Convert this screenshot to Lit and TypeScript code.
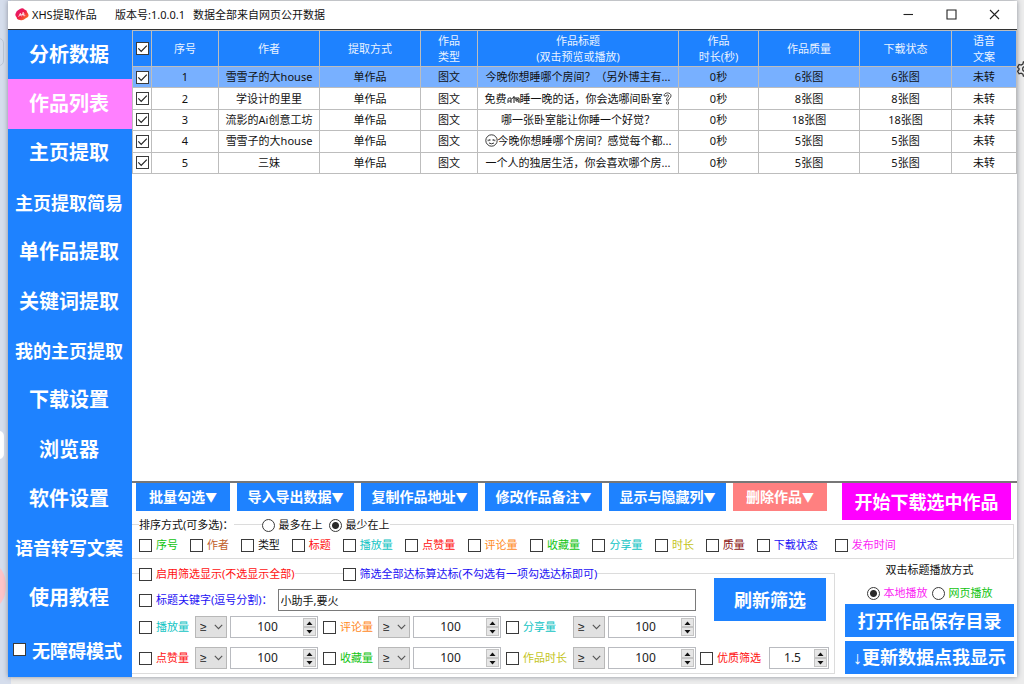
import { LitElement, html, css, svg, nothing } from "lit";
import { customElement, property, state } from "lit/decorators.js";
import { classMap } from "lit/directives/class-map.js";

const controls = css`
  :host,
  * {
    box-sizing: border-box;
  }
  button,
  input,
  select {
    font: inherit;
    color: inherit;
    margin: 0;
    padding: 0;
    border: 0;
    border-radius: 0;
    appearance: none;
  }
  .tick,
  .dot {
    flex: none;
    display: block;
    width: 13px;
    height: 13px;
    border: 1px solid #3a3a3a;
    background: #fff center / 11px 11px no-repeat;
  }
  .tick:checked {
    background-image: url("data:image/svg+xml,%3Csvg xmlns='http://www.w3.org/2000/svg' viewBox='0 0 11 11'%3E%3Cpath d='M1.3 5.4 4.2 8.3 9.8 2.7' fill='none' stroke='%23222' stroke-width='1.2'/%3E%3C/svg%3E");
  }
  .dot {
    border-radius: 50%;
  }
  .dot:checked {
    background-image: radial-gradient(circle, #2a2a2a 3px, transparent 4px);
  }
  .choice {
    display: inline-flex;
    align-items: center;
    gap: 4px;
    white-space: nowrap;
  }
  .green { color: #12c412; }
  .brown { color: #c0602a; }
  .black { color: #111; }
  .red { color: #ff1010; }
  .cyan { color: #12c4c4; }
  .orange { color: #ff8a1e; }
  .olive { color: #c4c41c; }
  .maroon { color: #8a1414; }
  .blue { color: #1c10f4; }
  .magenta { color: #fb1cf4; }
`;

@customElement("number-stepper")
export class NumberStepper extends LitElement {
  @property({ type: Number }) value = 0;
  @property({ type: Number }) step = 1;
  @property() label = "";

  static styles = [
    controls,
    css`
      :host {
        display: flex;
        height: 22px;
        padding: 1px;
        border: 1px solid #b9bbc0;
        background: #fff;
        font-size: 12px;
        color: #222;
      }
      .value {
        flex: 1;
        min-width: 0;
        text-align: center;
        background: none;
      }
      .arrows {
        display: grid;
        grid-template-rows: 1fr 1fr;
        width: 13px;
      }
      .arrow {
        display: grid;
        place-items: center;
        background: #e6e6e6;
        border: 1px solid #c4c4c4;
      }
      .arrow svg {
        display: block;
      }
    `,
  ];

  private bump(direction: number) {
    this.value = Math.round((this.value + direction * this.step) * 10) / 10;
  }

  render() {
    return html`
      <input class="value" aria-label=${this.label} .value=${String(this.value)} inputmode="decimal" />
      <span class="arrows">
        <button class="arrow" aria-label="+" @click=${() => this.bump(1)}>
          <svg width="7" height="4" viewBox="0 0 7 4"><path d="M0.5 4 3.5 0.5 6.5 4z" fill="#111" /></svg>
        </button>
        <button class="arrow" aria-label="-" @click=${() => this.bump(-1)}>
          <svg width="7" height="4" viewBox="0 0 7 4"><path d="M0.5 0 3.5 3.5 6.5 0z" fill="#111" /></svg>
        </button>
      </span>
    `;
  }
}

@customElement("side-nav")
export class SideNav extends LitElement {
  @state() private active = "作品列表";

  private items = [
    "分析数据", "作品列表", "主页提取", "主页提取简易", "单作品提取", "关键词提取",
    "我的主页提取", "下载设置", "浏览器", "软件设置", "语音转写文案", "使用教程",
  ];

  static styles = [
    controls,
    css`
      :host {
        display: flex;
        flex-direction: column;
        background: #1e82ff;
        color: #fff;
        font-weight: 700;
      }
      .item {
        flex: 49 1 0;
        padding-right: 2px;
        background: none;
        font-size: 20px;
        line-height: 24px;
        cursor: pointer;
      }
      .long {
        font-size: 18px;
      }
      .active {
        background: #ff80ff;
      }
      .access {
        flex: 54 1 0;
        justify-content: center;
        gap: 6px;
        padding-right: 5px;
        font-size: 18px;
      }
    `,
  ];

  render() {
    return html`
      ${this.items.map(
        (name) => html`<button
          class=${classMap({ item: true, long: name.length > 5, active: name === this.active })}
          @click=${() => (this.active = name)}
        >${name}</button>`,
      )}
      <label class="choice access"><input class="tick" type="checkbox" />无障碍模式</label>
    `;
  }
}

const bed = html`<svg class="glyph" width="13" height="11" viewBox="0 0 13 11">
  <path d="M1 9V5.5Q1 4 2.5 4H4V9M1.5 7H4M4.5 5 7 3M7 2V9M7 4H12V9M9 4V7H12M9.5 5.5H11" fill="none" stroke="#222" />
</svg>`;
const question = html`<svg class="glyph" width="9" height="13" viewBox="0 0 9 13">
  <path d="M1 3.8C1 0 8 0 8 3.8 8 6 5.7 6.3 5.7 8.2H3.4C3.4 5.6 5.6 5.4 5.6 3.9 5.6 2.6 3.3 2.6 3.2 4.2Z" fill="none" stroke="#333" stroke-width=".9" />
  <circle cx="4.5" cy="11" r="1.2" fill="none" stroke="#333" stroke-width=".9" />
</svg>`;
const face = html`<svg class="glyph" width="13" height="13" viewBox="0 0 13 13">
  <circle cx="6.5" cy="6.5" r="5.7" fill="none" stroke="#222" stroke-width=".9" />
  <path d="M3.2 5.6V7.2M4.8 5V7M8.2 5V7M9.8 5.6V7.2M4 9Q6.5 10.6 9 9" fill="none" stroke="#222" stroke-width=".9" />
</svg>`;

@customElement("works-table")
export class WorksTable extends LitElement {
  private columns: [string, string?][] = [
    ["序号"], ["作者"], ["提取方式"], ["作品", "类型"], ["作品标题", "(双击预览或播放)"],
    ["作品", "时长(秒)"], ["作品质量"], ["下载状态"], ["语音", "文案"],
  ];

  private rows = [
    { author: "雪雪子的大house", title: "今晚你想睡哪个房间？（另外博主有...", images: 6 },
    { author: "学设计的里里", title: html`免费${bed}睡一晚的话，你会选哪间卧室${question}`, images: 8 },
    { author: "流影的Ai创意工坊", title: "哪一张卧室能让你睡一个好觉？", images: 18 },
    { author: "雪雪子的大house", title: html`${face}今晚你想睡哪个房间？感觉每个都...`, images: 5 },
    { author: "三妹", title: "一个人的独居生活，你会喜欢哪个房...", images: 5 },
  ];

  static styles = [
    controls,
    css`
      :host {
        display: block;
        background: #fff;
      }
      .grid {
        width: 100%;
        height: 144px;
        table-layout: fixed;
        border-collapse: collapse;
        text-align: center;
        line-height: 16px;
      }
      .c0 { width: 19px; }
      .c1 { width: 67px; }
      .c2, .c3 { width: 101px; }
      .c4 { width: 57px; }
      .c5 { width: 201px; }
      .c6 { width: 80px; }
      .c7 { width: 101px; }
      .c8 { width: 92px; }
      .c9 { width: 65px; }
      th {
        height: 36px;
        font-weight: 400;
        background: #1e82ff;
        color: #eaf3ff;
      }
      th,
      td {
        padding: 0;
        border: 1px solid #bdbdbd;
        white-space: nowrap;
        overflow: hidden;
      }
      .picked td {
        background: #78b0ff;
      }
      .tick {
        margin: 0 auto;
      }
      .glyph {
        vertical-align: -2px;
      }
    `,
  ];

  render() {
    return html`
      <table class="grid">
        <colgroup>
          ${[0, 1, 2, 3, 4, 5, 6, 7, 8, 9].map((n) => html`<col class="c${n}" />`)}
        </colgroup>
        <thead>
          <tr>
            <th><input class="tick" type="checkbox" aria-label="全选" checked /></th>
            ${this.columns.map(([a, b]) => html`<th scope="col">${a}${b ? html`<br />${b}` : nothing}</th>`)}
          </tr>
        </thead>
        <tbody>
          ${this.rows.map(
            (row, i) => html`<tr class=${classMap({ picked: i === 0 })}>
              <td><input class="tick" type="checkbox" aria-label=${`选择${i + 1}`} checked /></td>
              <td>${i + 1}</td>
              <td>${row.author}</td>
              <td>单作品</td>
              <td>图文</td>
              <td>${row.title}</td>
              <td>0秒</td>
              <td>${row.images}张图</td>
              <td>${row.images}张图</td>
              <td>未转</td>
            </tr>`,
          )}
        </tbody>
      </table>
    `;
  }
}

@customElement("control-panel")
export class ControlPanel extends LitElement {
  private menus = ["批量勾选", "导入导出数据", "复制作品地址", "修改作品备注", "显示与隐藏列", "删除作品"];

  private sorts = [
    ["序号", "green"], ["作者", "brown"], ["类型", "black"], ["标题", "red"], ["播放量", "cyan"],
    ["点赞量", "red"], ["评论量", "orange"], ["收藏量", "green"], ["分享量", "cyan"], ["时长", "olive"],
    ["质量", "maroon"], ["下载状态", "blue"], ["发布时间", "magenta"],
  ];

  private filters = [
    ["播放量", "cyan"], ["评论量", "orange"], ["分享量", "cyan"],
    ["点赞量", "red"], ["收藏量", "green"], ["作品时长", "olive"],
  ];

  static styles = [
    controls,
    css`
      :host {
        display: block;
        padding: 0 3px 3px 0;
        border-top: 2px solid #777;
        background: #fff;
        line-height: 16px;
      }
      .toolbar {
        display: flex;
        align-items: flex-start;
        gap: 7px;
        padding: 0 3px 0 4px;
      }
      .menu {
        width: 94px;
        height: 28px;
        background: #1e82ff;
        color: #fff;
        font-size: 14px;
        font-weight: 700;
        white-space: nowrap;
      }
      .wide {
        width: 117px;
      }
      .caret {
        font-size: 12px;
      }
      .danger {
        background: #ff8080;
      }
      .big {
        height: 33px;
        background: #1e82ff;
        color: #fff;
        font-size: 18px;
        font-weight: 700;
        white-space: nowrap;
      }
      .start {
        height: 37px;
        width: 169px;
        margin-left: auto;
        background: #ff00ff;
      }
      .group {
        border: 1px solid #dcdcdc;
        border-left: 0;
      }
      .over {
        display: flex;
        align-items: center;
        height: 16px;
        margin-top: -8px;
      }
      .cap {
        background: #fff;
      }
      .order {
        display: flex;
        gap: 6px;
        margin-left: 28px;
        background: #fff;
      }
      .sort {
        margin-top: 4px;
        padding: 0 4px 5px 7px;
      }
      .sorts {
        display: grid;
        grid-template-columns: repeat(4, 102fr) repeat(5, 125fr) 102fr 102fr 156fr 349fr;
        margin-top: 4px;
      }
      .lower {
        display: grid;
        grid-template-columns: 1fr 169px;
        gap: 10px;
      }
      .filter {
        display: grid;
        grid-template-columns: 557px 1fr;
        gap: 4px;
        margin-top: 14px;
        padding: 0 5px 4px 7px;
      }
      .all {
        margin-left: 48px;
      }
      .keyword {
        display: flex;
        align-items: center;
        gap: 5px;
        margin-top: 7px;
      }
      .words {
        flex: 1;
        height: 22px;
        padding: 0 2px;
        border: 1px solid #7a7a7a;
        color: #111;
      }
      .limits {
        display: grid;
        grid-template-columns: 53px 32px 90px 52px 32px 90px 64px 32px 88px;
        column-gap: 3px;
        row-gap: 9px;
        align-items: center;
        margin-top: 5px;
      }
      .limits number-stepper {
        width: 88px;
      }
      .pick {
        display: grid;
        align-items: center;
      }
      .op,
      .chevron {
        grid-area: 1 / 1;
      }
      .op {
        height: 22px;
        padding-left: 4px;
        background: #e1e1e1;
        border: 1px solid #b8b8b8;
        color: #222;
        font-family: "Liberation Sans", sans-serif;
        font-size: 12px;
      }
      .chevron {
        justify-self: end;
        margin-right: 4px;
        pointer-events: none;
      }
      .side {
        display: flex;
        flex-direction: column;
        justify-content: space-between;
      }
      .refresh {
        width: 112px;
        height: 43px;
        margin: 4px 0 0 14px;
      }
      .quality {
        display: flex;
        align-items: center;
        justify-content: space-between;
      }
      .quality number-stepper {
        width: 60px;
      }
      .play {
        display: flex;
        flex-direction: column;
        padding-top: 3px;
      }
      .how {
        display: flex;
        justify-content: center;
        gap: 4px;
        margin: 7px 0 3px;
      }
      .how + .big {
        margin-bottom: 4px;
      }
      .center {
        text-align: center;
      }
      .down {
        font-family: "Liberation Sans", sans-serif;
      }
    `,
  ];

  render() {
    return html`
      <div class="toolbar">
        ${this.menus.map(
          (name) => html`<button
            class=${classMap({ menu: true, wide: name.length > 4, danger: name === "删除作品" })}
          >${name}<span class="caret">▼</span></button>`,
        )}
        <button class="big start">开始下载选中作品</button>
      </div>

      <div class="group sort" role="group" aria-labelledby="sort-title">
        <div class="over">
          <span class="cap" id="sort-title">排序方式(可多选)：</span>
          <div class="order">
            <label class="choice"><input class="dot" type="radio" name="order" />最多在上</label>
            <label class="choice"><input class="dot" type="radio" name="order" checked />最少在上</label>
          </div>
        </div>
        <div class="sorts">
          ${this.sorts.map(
            ([name, tone]) => html`<label class="choice ${tone}"><input class="tick" type="checkbox" />${name}</label>`,
          )}
        </div>
      </div>

      <div class="lower">
        <div class="group filter" role="group" aria-label="筛选">
          <div>
            <div class="over">
              <label class="choice cap red"><input class="tick" type="checkbox" />启用筛选显示(不选显示全部)</label>
              <label class="choice cap all blue"><input class="tick" type="checkbox" />筛选全部达标算达标(不勾选有一项勾选达标即可)</label>
            </div>
            <div class="keyword">
              <label class="choice blue"><input class="tick" type="checkbox" />标题关键字(逗号分割)：</label>
              <input class="words" aria-label="标题关键字" value="小助手,要火" />
            </div>
            <div class="limits">
              ${this.filters.map(
                ([name, tone]) => html`
                  <label class="choice ${tone}"><input class="tick" type="checkbox" />${name}</label>
                  <span class="pick">
                    <select class="op" aria-label=${name}><option>≥</option><option>≤</option></select>
                    <svg class="chevron" width="9" height="6" viewBox="0 0 9 6">
                      <path d="M.8 .8 4.5 4.6 8.2 .8" fill="none" stroke="#555" stroke-width="1.1" />
                    </svg>
                  </span>
                  <number-stepper label=${name} value="100"></number-stepper>
                `,
              )}
            </div>
          </div>
          <div class="side">
            <button class="big refresh">刷新筛选</button>
            <div class="quality">
              <label class="choice red"><input class="tick" type="checkbox" />优质筛选</label>
              <number-stepper label="优质筛选" value="1.5" step="0.1"></number-stepper>
            </div>
          </div>
        </div>

        <div class="play">
          <div class="center">双击标题播放方式</div>
          <div class="how">
            <label class="choice magenta"><input class="dot" type="radio" name="play" checked />本地播放</label>
            <label class="choice green"><input class="dot" type="radio" name="play" />网页播放</label>
          </div>
          <button class="big">打开作品保存目录</button>
          <button class="big"><span class="down">↓</span>更新数据点我显示</button>
        </div>
      </div>
    `;
  }
}

@customElement("app-root")
export class AppRoot extends LitElement {
  static styles = [
    controls,
    css`
      :host {
        position: relative;
        display: block;
        height: 100vh;
        padding: 1px 7px 7px 8px;
        overflow: hidden;
        background: linear-gradient(90deg, #d5ddec 11px, #ececec 11px);
        font-family: "Noto Sans", "Noto Sans CJK SC", sans-serif;
        font-size: 11px;
        color: #111;
      }
      .window {
        position: relative;
        display: flex;
        flex-direction: column;
        height: 100%;
        background: #fff;
        box-shadow: 0 0 5px #8a8f99;
      }
      .title {
        display: flex;
        align-items: center;
        height: 29px;
        padding: 0 17px 2px 7px;
        border-bottom: 1px solid #333;
        white-space: pre;
      }
      .name {
        width: 83px;
        margin-left: 3px;
      }
      .version {
        width: 78px;
      }
      .buttons {
        display: flex;
        gap: 32px;
        margin-left: auto;
      }
      .wbtn {
        background: none;
        width: 11px;
        height: 11px;
      }
      .wbtn svg,
      .logo {
        display: block;
      }
      .body {
        flex: 1;
        display: grid;
        grid-template-columns: 124px 1fr;
        min-height: 0;
      }
      .main {
        display: flex;
        flex-direction: column;
        min-width: 0;
      }
      works-table {
        flex: 1;
      }
      .behind {
        position: absolute;
      }
      .gear {
        right: -9px;
        top: 61px;
      }
      .pill {
        left: -6px;
        top: 38px;
        width: 10px;
        height: 28px;
        border: 1px solid #bcc5d4;
        border-radius: 5px;
      }
      .white {
        left: -6px;
        top: 431px;
        width: 10px;
        height: 28px;
        border-radius: 5px;
        background: #fff;
      }
      .pink {
        left: -22px;
        top: 564px;
        width: 28px;
        height: 44px;
        border-radius: 50%;
        background: #fcc4c8;
      }
    `,
  ];

  private glyph(d: string) {
    return html`<svg width="11" height="11" viewBox="0 0 11 11">
      ${svg`<path d=${d} fill="none" stroke="#222" stroke-width="1.1" />`}
    </svg>`;
  }

  render() {
    return html`
      <span class="behind pill"></span>
      <span class="behind white"></span>
      <span class="behind pink"></span>
      <div class="window">
        <header class="title">
          <svg class="logo" width="14" height="13" viewBox="0 0 14 13">
            <defs>
              <linearGradient id="petal" x1="0" y1="0" x2="1" y2="1">
                <stop offset="0" stop-color="#e0147c" />
                <stop offset=".5" stop-color="#f01c48" />
                <stop offset="1" stop-color="#ff8a14" />
              </linearGradient>
            </defs>
            <path d="M3 2.2Q4.5 1.4 6 .6 8-.2 9.5 1.6 12 2 12.3 4.6 14.4 7 13 9 11.6 9.6 10.4 10.6 8 12.8 5 11.9 2 12 1.6 9.2-.6 7 1 4.8 1.4 3 3 2.2Z" fill="url(#petal)" />
            <path d="M3.6 8.8 5.4 5.2 5.8 7.8M6.6 8.4 8.2 4.2 8.8 8 10.4 7.4M4.2 7.2 9.8 6" fill="none" stroke="#fff" stroke-width=".8" stroke-opacity=".85" />
          </svg>
          <span class="name">XHS提取作品</span>
          <span class="version">版本号:1.0.0.1</span>
          <span>数据全部来自网页公开数据</span>
          <div class="buttons">
            <button class="wbtn" aria-label="最小化">${this.glyph("M.5 5.5H10")}</button>
            <button class="wbtn" aria-label="最大化">${this.glyph("M1 1H10V10H1Z")}</button>
            <button class="wbtn" aria-label="关闭">${this.glyph("M1 1 10 10M10 1 1 10")}</button>
          </div>
        </header>
        <div class="body">
          <side-nav></side-nav>
          <main class="main">
            <works-table></works-table>
            <control-panel></control-panel>
          </main>
        </div>
      </div>
      <svg class="behind gear" width="16" height="16" viewBox="0 0 16 16" fill="none" stroke="#333" stroke-width="1.3">
        <path d="M6.4 1H9.6L10.1 3 11.9 4 13.9 3.4 15.4 6.1 14 7.5V8.8L15.4 10.2 13.9 12.8 11.9 12.2 10.1 13.2 9.6 15.2H6.4L5.9 13.2 4.1 12.2 2.1 12.8.6 10.2 2 8.8V7.5L.6 6.1 2.1 3.4 4.1 4 5.9 3Z" />
        <circle cx="8" cy="8" r="2.4" />
      </svg>
    `;
  }
}
